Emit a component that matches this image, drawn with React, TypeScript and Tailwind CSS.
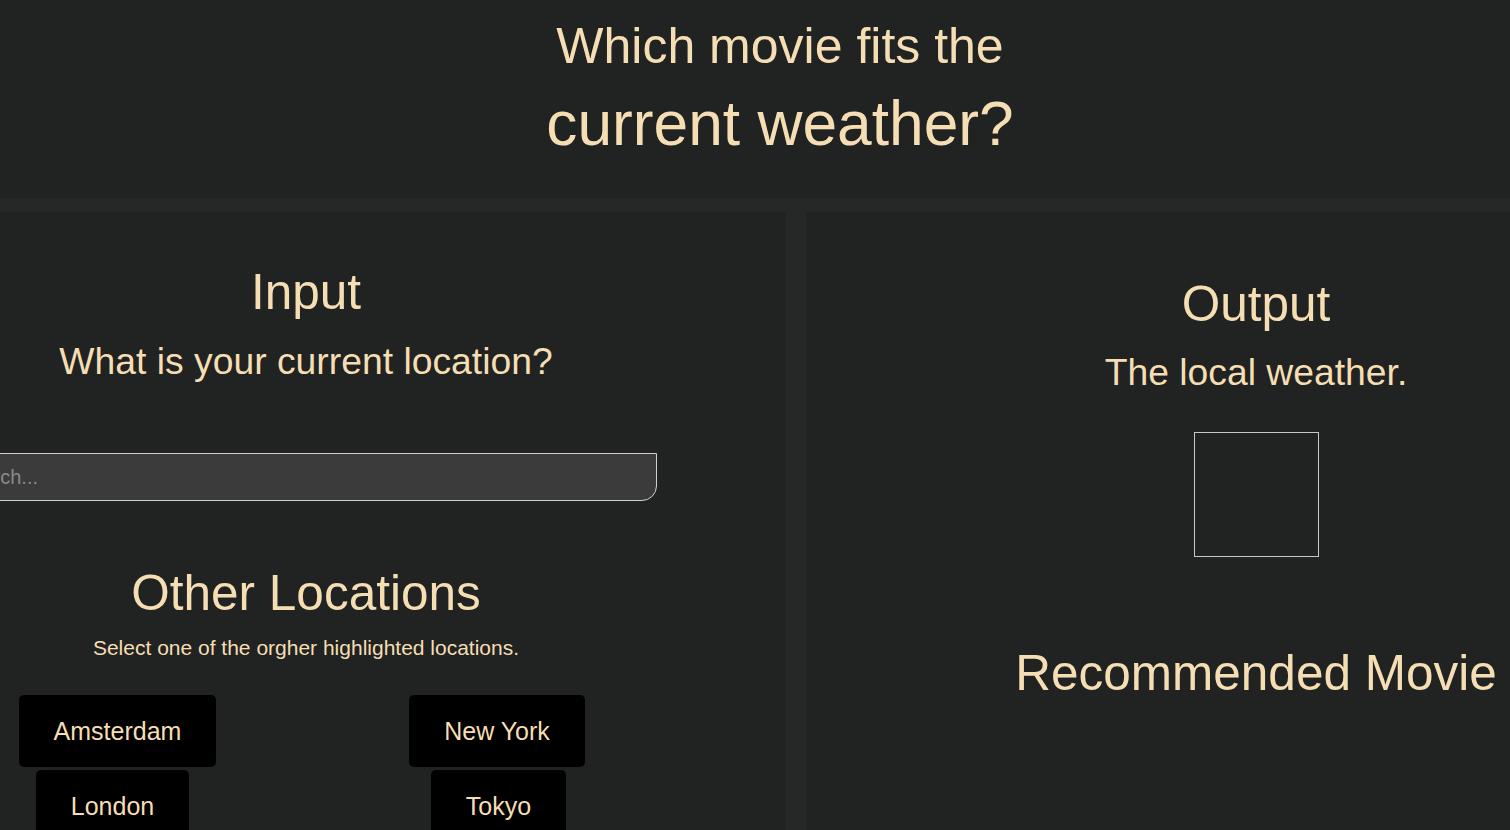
import React from "react";

export default function App() {
  return (
    <div className="h-[830px] w-[1510px] overflow-hidden bg-[#262827] font-['Liberation_Sans',Arial,sans-serif] text-[#f5deb3]">
      <header className="flex h-[198px] flex-col items-center bg-[#212322] pl-[50px]">
        <h1 className="mt-[18px] text-[50px] leading-[1.15] whitespace-nowrap">Which movie fits the</h1>
        <h1 className="mt-[12.5px] text-[62.3px] leading-[1.15] whitespace-nowrap">current weather?</h1>
      </header>
      <div className="mt-[14px] flex gap-[20px]">
        <section className="flex h-[640px] w-[786px] shrink-0 flex-col items-center bg-[#212322] pr-[174px]">
          <h2 className="mt-[52px] text-[49.5px] leading-[1.15] whitespace-nowrap">Input</h2>
          <p className="mt-[19px] text-[37.3px] leading-[1.15] whitespace-nowrap">What is your current location?</p>
          <input
            type="text"
            placeholder="Search..."
            className="ml-[-52px] mt-[70.6px] h-[48px] w-[709px] self-start rounded-br-[15px] border border-[#d0d0d0] bg-[#3a3b3a] pl-[9px] text-[20px] text-[#f5deb3] outline-none placeholder:text-[#8a8a8a]"
          />
          <h2 className="mt-[63.7px] text-[49.5px] leading-[1.15] whitespace-nowrap">Other Locations</h2>
          <p className="mt-[14.4px] text-[21px] leading-[1.15] whitespace-nowrap">Select one of the orgher highlighted locations.</p>
          <div className="mt-[34px] flex flex-col gap-[3px] self-stretch">
            <div className="flex">
              <button className="ml-[19px] flex h-[72px] w-[197px] items-center justify-center rounded-[5px] bg-black pt-[2px] text-[25px] text-[#f5deb3]">Amsterdam</button>
              <button className="ml-[193px] flex h-[72px] w-[176px] items-center justify-center rounded-[5px] bg-black pt-[2px] text-[25px] text-[#f5deb3]">New York</button>
            </div>
            <div className="flex">
              <button className="ml-[36px] flex h-[72px] w-[153px] items-center justify-center rounded-[5px] bg-black pt-[2px] text-[25px] text-[#f5deb3]">London</button>
              <button className="ml-[242px] flex h-[72px] w-[135px] items-center justify-center rounded-[5px] bg-black pt-[2px] text-[25px] text-[#f5deb3]">Tokyo</button>
            </div>
          </div>
        </section>
        <section className="flex h-[640px] w-[900px] shrink-0 flex-col items-center bg-[#212322]">
          <h2 className="mt-[64.4px] text-[49.5px] leading-[1.15] whitespace-nowrap">Output</h2>
          <p className="mt-[18px] text-[37.3px] leading-[1.15] whitespace-nowrap">The local weather.</p>
          <div className="mt-[37.5px] h-[125px] w-[125px] border border-[#c8c8c8]" />
          <h2 className="mt-[88.4px] text-[49.5px] leading-[1.15] whitespace-nowrap">Recommended Movie</h2>
        </section>
      </div>
    </div>
  );
}
